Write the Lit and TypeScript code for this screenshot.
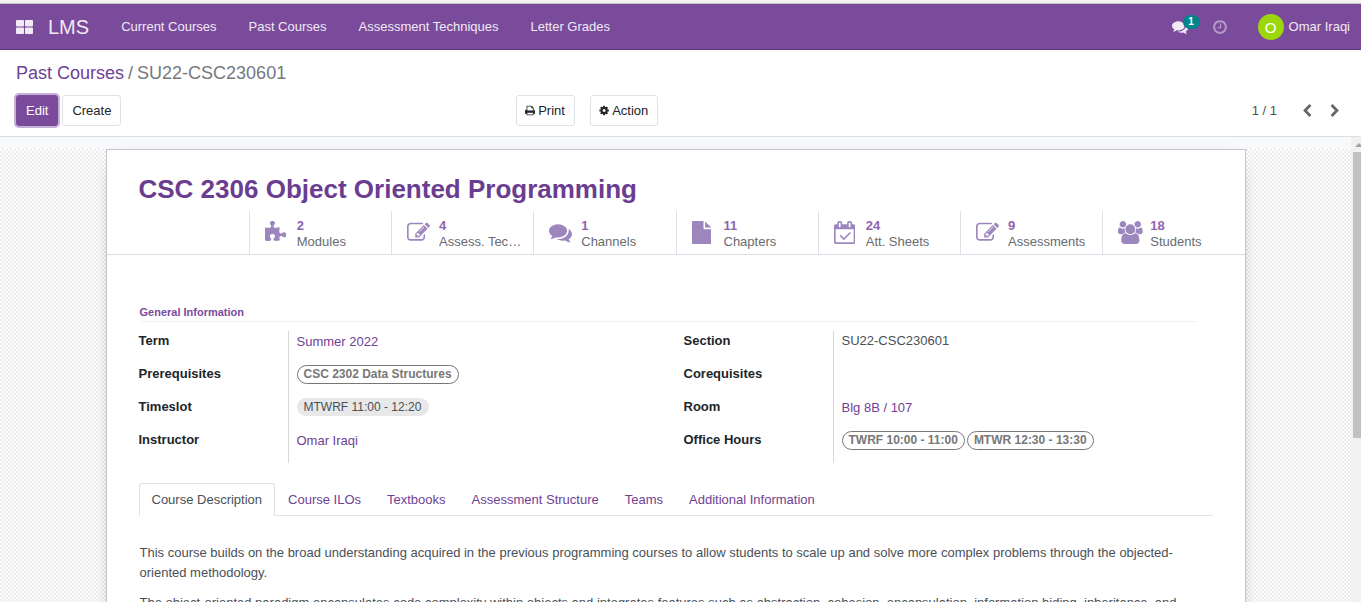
import { LitElement, html, css, svg, nothing } from "lit";
import { customElement, property, state } from "lit/decorators.js";
import { classMap } from "lit/directives/class-map.js";

const ICONS: Record<string, { box: string; d: string }> = {
  comments: {
    box: "0 0 1792 1792",
    d: "M1408 768q0 139-94 257t-256.5 186.5-353.5 68.5q-86 0-176-16-124 88-278 128-36 9-86 16h-3q-11 0-20.5-8t-11.5-21q-1-3-1-6.5t.5-6.5 2-6l2.5-5 3.5-5.5 4-5 4.5-5 4-4.5q5-6 23-25t26-29.5 22.5-29 25-38.5 20.5-44q-124-72-195-177t-71-224q0-139 94-257t256.5-186.5 353.5-68.5 353.5 68.5 256.5 186.5 94 257zm384 256q0 120-71 224.5t-195 176.5q10 24 20.5 44t25 38.5 22.5 29 26 29.5 23 25q1 1 4 4.5t4.5 5 4 5 3.5 5.5l2.5 5 2 6 .5 6.5-1 6.5q-3 14-13 22t-22 7q-50-7-86-16-154-40-278-128-90 16-176 16-271 0-472-132 58 4 88 4 161 0 309-45t264-129q125-92 192-212t67-254q0-77-23-152 129 71 204 178t75 230z",
  },
  clock: {
    box: "0 0 1792 1792",
    d: "M1024 544v448q0 14-9 23t-23 9h-320q-14 0-23-9t-9-23v-64q0-14 9-23t23-9h224v-352q0-14 9-23t23-9h64q14 0 23 9t9 23zm416 352q0-148-73-273t-198-198-273-73-273 73-198 198-73 273 73 273 198 198 273 73 273-73 198-198 73-273zm224 0q0 209-103 385.5t-279.5 279.5-385.5 103-385.5-103-279.5-279.5-103-385.5 103-385.5 279.5-279.5 385.5-103 385.5 103 279.5 279.5 103 385.5z",
  },
  print: {
    box: "64 0 1664 1792",
    d: "M448 1536h896v-256h-896v256zm0-640h896v-384h-160q-40 0-68-28t-28-68v-160h-640v640zm1152 64q0-26-19-45t-45-19-45 19-19 45 19 45 45 19 45-19 19-45zm128 0v416q0 13-9.500 22.500t-22.500 9.500h-224v160q0 40-28 68t-68 28h-960q-40 0-68-28t-28-68v-160h-224q-13 0-22.500-9.500t-9.500-22.500v-416q0-79 56.500-135.500t135.500-56.500h64v-544q0-40 28-68t68-28h672q40 0 88 20t76 48l152 152q28 28 48 76t20 88v256h64q79 0 135.500 56.500t56.500 135.500z",
  },
  cog: {
    box: "64 0 1664 1792",
    d: "M1152 896q0-106-75-181t-181-75-181 75-75 181 75 181 181 75 181-75 75-181zm512-109v222q0 12-8 23t-20 13l-185 28q-19 54-39 91 35 50 107 138 10 12 10 25t-9 23q-27 37-99 108t-94 71q-12 0-26-9l-138-108q-44 23-91 38-16 136-29 186-7 28-36 28h-222q-14 0-24.5-8.5t-11.5-21.5l-28-184q-49-16-90-37l-141 107q-10 9-25 9-14 0-25-11-126-114-165-168-7-10-7-23 0-12 8-23 15-21 51-66.5t54-70.5q-27-50-41-99l-183-27q-13-2-21-12.5t-8-23.5v-222q0-12 8-23t19-13l186-28q14-46 39-92-40-57-107-138-10-12-10-24 0-10 9-23 26-36 98.5-107.500t94.500-71.500q13 0 26 10l138 107q44-23 91-38 16-136 29-186 7-28 36-28h222q14 0 24.500 8.500t11.500 21.500l28 184q49 16 90 37l142-107q9-9 24-9 13 0 25 10 129 119 165 170 7 8 7 22 0 12-8 23-15 21-51 66.500t-54 70.500q26 50 41 98l183 28q13 2 21 12.500t8 23.500z",
  },
  left: {
    box: "0 0 1792 1792",
    d: "M1427 301l-531 531 531 531q19 19 19 45t-19 45l-166 166q-19 19-45 19t-45-19l-742-742q-19-19-19-45t19-45l742-742q19-19 45-19t45 19l166 166q19 19 19 45t-19 45z",
  },
  right: {
    box: "0 0 1792 1792",
    d: "M1363 877l-742 742q-19 19-45 19t-45-19l-166-166q-19-19-19-45t19-45l531-531-531-531q-19-19-19-45t19-45l166-166q19-19 45-19t45 19l742 742q19 19 19 45t-19 45z",
  },
  puzzle: {
    box: "91 0 1664 1792",
    d: "M1755 1083q0 81-44.5 135t-123.5 54q-41 0-77.5-17.5t-59-38-56.5-38-71-17.5q-110 0-110 124 0 39 16 115t15 115v5q-22 0-33 1-34 3-97.5 11.5t-115.5 13.5-98 5q-61 0-103-26.5t-42-83.5q0-37 17.5-71t38-56.5 38-59 17.5-77.5q0-79-54-123.5t-135-44.5q-84 0-143 45.5t-59 127.5q0 43 15 83t33.5 64.5 33.5 53 15 50.5q0 45-46 89-37 35-117 35-95 0-245-24-9-2-27.5-4t-27.5-4l-13-2q-1 0-3-1-2 0-2-1v-1024q2 1 17.5 3.5t34 5 21.5 3.5q150 24 245 24 80 0 117-35 46-44 46-89 0-22-15-50.5t-33.5-53-33.5-64.5-15-83q0-82 59-127.500t144-45.500q80 0 134 44.500t54 123.500q0 41-17.500 77.500t-38 59-38 56.500-17.500 71q0 57 42 83.500t103 26.500q64 0 180-15t163-17v2q-1 2-3.500 17.500t-5 34-3.500 21.500q-24 150-24 245 0 80 35 117 44 46 89 46 22 0 50.500-15t53-33.500 64.500-33.500 83-15q82 0 127.500 59t45.500 143z",
  },
  edit: {
    box: "0 0 1792 1792",
    d: "M888 1184l116-116-152-152-116 116v56h96v96h56zm440-720q-16-16-33 1l-350 350q-17 17-1 33t33-1l350-350q17-17 1-33zm80 594v190q0 119-84.5 203.5t-203.5 84.5h-832q-119 0-203.5-84.5t-84.5-203.5v-832q0-119 84.5-203.5t203.5-84.5h832q63 0 117 25 15 7 18 23 3 17-9 29l-49 49q-14 14-32 8-23-6-45-6h-832q-66 0-113 47t-47 113v832q0 66 47 113t113 47h832q66 0 113-47t47-113v-126q0-13 9-22l64-64q15-15 35-7t20 29zm-96-738l288 288-672 672h-288v-288zm444 132l-92 92-288-288 92-92q28-28 68-28t68 28l152 152q28 28 28 68t-28 68z",
  },
  file: {
    box: "128 0 1536 1792",
    d: "M1152 512v-472q22 14 36 28l408 408q14 14 28 36h-472zm-128 32q0 40 28 68t68 28h544v1056q0 40-28 68t-68 28h-1344q-40 0-68-28t-28-68v-1600q0-40 28-68t68-28h800v544z",
  },
  calendar: {
    box: "0 0 1664 1792",
    d: "M1303 964l-512 512q-10 9-23 9t-23-9l-288-288q-9-10-9-23t9-22l46-46q9-9 22-9t23 9l220 220 444-444q10-9 23-9t22 9l46 46q9 9 9 22t-9 23zm-1175 700h1408v-1024h-1408v1024zm384-1216v-288q0-14-9-23t-23-9h-64q-14 0-23 9t-9 23v288q0 14 9 23t23 9h64q14 0 23-9t9-23zm768 0v-288q0-14-9-23t-23-9h-64q-14 0-23 9t-9 23v288q0 14 9 23t23 9h64q14 0 23-9t9-23zm384-64v1280q0 52-38 90t-90 38h-1408q-52 0-90-38t-38-90v-1280q0-52 38-90t90-38h128v-96q0-66 47-113t113-47h64q66 0 113 47t47 113v96h384v-96q0-66 47-113t113-47h64q66 0 113 47t47 113v96h128q52 0 90 38t38 90z",
  },
  users: {
    box: "-64 0 1920 1792",
    d: "M529 896q-162 5-265 128h-134q-82 0-138-40.5t-56-118.5q0-353 124-353 6 0 43.5 21t97.5 42.5 119 21.5q67 0 133-23-5 37-5 66 0 139 81 256zm1071 637q0 120-73 189.5t-194 69.5h-874q-121 0-194-69.5t-73-189.5q0-53 3.5-103.5t14-109 26.5-108.5 43-97.5 62-81 85.5-53.5 111.5-20q10 0 43 21.5t73 48 107 48 135 21.5 135-21.5 107-48 73-48 43-21.5q61 0 111.5 20t85.5 53.5 62 81 43 97.5 26.5 108.5 14 109 3.5 103.5zm-1024-1277q0 106-75 181t-181 75-181-75-75-181 75-181 181-75 181 75 75 181zm704 384q0 159-112.5 271.5t-271.5 112.5-271.5-112.5-112.5-271.5 112.5-271.5 271.5-112.5 271.5 112.5 112.5 271.5zm576 225q0 78-56 118.5t-138 40.5h-134q-103-123-265-128 81-117 81-256 0-29-5-66 66 23 133 23 59 0 119-21.5t97.5-42.5 43.5-21q124 0 124 353zm-128-609q0 106-75 181t-181 75-181-75-75-181 75-181 181-75 181 75 75 181z",
  },
  apps: {
    box: "0 0 17 14",
    d: "M1 0h6q1 0 1 1v4.500q0 1-1 1h-6q-1 0-1-1v-4.500q0-1 1-1zM10 0h6q1 0 1 1v4.500q0 1-1 1h-6q-1 0-1-1v-4.500q0-1 1-1zM1 7.500h6q1 0 1 1v4.500q0 1-1 1h-6q-1 0-1-1v-4.500q0-1 1-1zM10 7.500h6q1 0 1 1v4.500q0 1-1 1h-6q-1 0-1-1v-4.500q0-1 1-1z",
  },
};

@customElement("lms-icon")
class LmsIcon extends LitElement {
  static styles = css`
    :host { display: inline-flex; flex: none; height: 23px; }
    svg { display: block; height: 100%; width: auto; fill: currentColor; }
  `;
  @property() name = "";
  render() {
    const icon = ICONS[this.name];
    return html`<svg viewBox=${icon.box} aria-hidden="true">${svg`<path d=${icon.d}></path>`}</svg>`;
  }
}

@customElement("lms-navbar")
class LmsNavbar extends LitElement {
  static styles = css`
    :host { display: block; }
    .bar {
      display: flex; align-items: center; height: 46px; box-sizing: border-box;
      padding: 0 11px 0 16px; background: #7a4b9b; border-bottom: 1px solid #613a7e;
      color: #f0eaf4; font-size: 13px; line-height: 20px;
    }
    a, button { color: inherit; text-decoration: none; font: inherit; background: none; border: 0; padding: 0; }
    .apps { display: flex; }
    .apps lms-icon { height: 14px; }
    .brand { font-size: 20px; margin: 0 32px 0 15px; }
    .menu { display: flex; gap: 32px; flex: 1; }
    .menu a { white-space: nowrap; }
    .tray { display: flex; align-items: center; }
    .chat { position: relative; display: flex; margin-right: 24px; }
    .chat lms-icon { height: 16px; }
    .badge {
      position: absolute; left: 11px; top: -4px; width: 17px; height: 14px; border-radius: 7px;
      background: #00838a; color: #fff; font-size: 10px; line-height: 14px; font-weight: bold; text-align: center;
    }
    .clock { display: flex; opacity: 0.5; margin-right: 30px; }
    .clock lms-icon { height: 16px; }
    .user { display: flex; align-items: center; gap: 5px; }
    .avatar {
      width: 26px; height: 26px; border-radius: 50%; background: #9bd70b; color: #fff;
      font-size: 15px; line-height: 27px; text-align: center;
    }
  `;
  render() {
    return html`<nav class="bar">
      <button class="apps" aria-label="Applications"><lms-icon name="apps"></lms-icon></button>
      <a class="brand" href="#">LMS</a>
      <div class="menu">
        ${["Current Courses", "Past Courses", "Assessment Techniques", "Letter Grades"].map(
          (m) => html`<a href="#">${m}</a>`
        )}
      </div>
      <div class="tray">
        <button class="chat" aria-label="Messages"><lms-icon name="comments"></lms-icon><span class="badge">1</span></button>
        <button class="clock" aria-label="Activities"><lms-icon name="clock"></lms-icon></button>
        <button class="user"><span class="avatar">O</span><span>Omar Iraqi</span></button>
      </div>
    </nav>`;
  }
}

@customElement("lms-control-panel")
class LmsControlPanel extends LitElement {
  static styles = css`
    :host { display: block; border-bottom: 1px solid #dcdfe4; background: #fff; }
    .panel { padding: 10px 16px; }
    .crumbs { display: flex; gap: 4px; font-size: 18px; line-height: 26px; color: #747a80; margin-bottom: 9px; }
    .crumbs a { color: #704194; text-decoration: none; }
    .row { display: grid; grid-template-columns: 500fr 829fr; }
    .left { display: flex; gap: 4px; }
    .rest { display: flex; justify-content: space-between; }
    .actions { display: flex; gap: 15px; }
    button { font: inherit; font-size: 13px; }
    .btn {
      display: flex; align-items: center; gap: 3px; height: 31px; box-sizing: border-box; padding: 0 9px;
      border: 1px solid #dee2e6; border-radius: 3px; background: #fff; color: #212529;
    }
    .btn lms-icon { height: 11px; }
    .btn.tool { padding: 0 9px 0 8px; }
    .btn.primary { background: #7a4b9b; border-color: #7a4b9b; color: #fff; box-shadow: 0 0 0 2px #c7b0d8; }
    .pager { display: flex; align-items: center; font-size: 13px; color: #495057; }
    .step { display: flex; border: 0; background: none; padding: 0; color: #63666a; }
    .step lms-icon { height: 14px; }
    .prev { margin: 0 14px 0 23px; }
    .next { margin-right: 3px; }
  `;
  render() {
    return html`<div class="panel">
      <div class="crumbs"><a href="#">Past Courses</a><span>/</span><span>SU22-CSC230601</span></div>
      <div class="row">
        <div class="left">
          <button class="btn primary">Edit</button>
          <button class="btn">Create</button>
        </div>
        <div class="rest">
          <div class="actions">
            <button class="btn tool"><lms-icon name="print"></lms-icon>Print</button>
            <button class="btn tool"><lms-icon name="cog"></lms-icon>Action</button>
          </div>
          <div class="pager">
            <span>1 / 1</span>
            <button class="step prev" aria-label="Previous"><lms-icon name="left"></lms-icon></button>
            <button class="step next" aria-label="Next"><lms-icon name="right"></lms-icon></button>
          </div>
        </div>
      </div>
    </div>`;
  }
}

type Kind = "link" | "text" | "outline" | "pill";
interface Field { label: string; kind: Kind; values: string[]; }

const STATS = [
  ["puzzle", "2", "Modules"],
  ["edit", "4", "Assess. Techniques"],
  ["comments", "1", "Channels"],
  ["file", "11", "Chapters"],
  ["calendar", "24", "Att. Sheets"],
  ["edit", "9", "Assessments"],
  ["users", "18", "Students"],
];

const GROUPS: Field[][] = [
  [
    { label: "Term", kind: "link", values: ["Summer 2022"] },
    { label: "Prerequisites", kind: "outline", values: ["CSC 2302 Data Structures"] },
    { label: "Timeslot", kind: "pill", values: ["MTWRF 11:00 - 12:20"] },
    { label: "Instructor", kind: "link", values: ["Omar Iraqi"] },
  ],
  [
    { label: "Section", kind: "text", values: ["SU22-CSC230601"] },
    { label: "Corequisites", kind: "outline", values: [] },
    { label: "Room", kind: "link", values: ["Blg 8B / 107"] },
    { label: "Office Hours", kind: "outline", values: ["TWRF 10:00 - 11:00", "MTWR 12:30 - 13:30"] },
  ],
];

const TABS = ["Course Description", "Course ILOs", "Textbooks", "Assessment Structure", "Teams", "Additional Information"];

@customElement("lms-course-sheet")
class LmsCourseSheet extends LitElement {
  static styles = css`
    :host {
      display: block; box-sizing: border-box; max-width: 1140px; margin: 0 auto; min-height: 100%;
      background: #fff; border: 1px solid #c4c4cf; box-shadow: 0 5px 20px -15px #000;
      font-size: 13px; line-height: 20px; color: #495057;
    }
    a { color: #704194; text-decoration: none; }
    h1 { margin: 0; padding: 24px 32px 7px; font-size: 26px; line-height: 30px; color: #6b3d90; }
    .stats { display: grid; grid-template-columns: repeat(8, minmax(0, 1fr)); border-bottom: 1px solid #dcdce6; }
    .stat {
      display: flex; align-items: center; gap: 6px; height: 43px; box-sizing: border-box;
      padding: 2px 12px 0 15px; border: 0; border-left: 1px solid #dfe1e8; background: none;
      font: inherit; line-height: 16px; text-align: left; color: #666b70;
    }
    .stat:first-of-type { grid-column-start: 2; }
    .glyph { display: flex; flex: none; width: 26px; padding-bottom: 2px; color: #9d86be; }
    .copy { min-width: 0; }
    .num { display: block; font-weight: bold; color: #9063b0; }
    .name { display: block; overflow: hidden; text-overflow: ellipsis; white-space: nowrap; }
    .body { padding: 48px 32px 0; }
    h2 {
      margin: 0 16px 9px 1px; font-size: 11px; line-height: 18px; color: #7a4b9b;
      border-bottom: 1px solid #f2f2f4;
    }
    .groups { display: grid; grid-template-columns: 1fr 1fr; gap: 16px; }
    dl { margin: 0; }
    .field { display: grid; grid-template-columns: 149px minmax(0, 1fr); height: 33px; }
    dt { font-weight: bold; color: #212529; }
    dd { margin: 0; padding-left: 8px; border-left: 1px solid #d8d8d8; display: flex; gap: 2px; align-items: flex-start; }
    dd a { padding-top: 1px; }
    .tag {
      font-size: 12px; line-height: 17px; border-radius: 10px; padding: 0 6px; margin-top: 1px;
      border: 1px solid #777; color: #777; font-weight: bold; white-space: nowrap;
    }
    .tag.pill { background: #e8e8e8; border-color: #e8e8e8; color: #495057; font-weight: normal; line-height: 16px; padding: 0 7px 0 6px; }
    .tabs { display: flex; margin-top: 20px; border-bottom: 1px solid #dee2e6; }
    .tab {
      font: inherit; color: #704194; background: none; padding: 6px 12px 5px; white-space: nowrap;
      border: 1px solid transparent; border-bottom: 0; border-radius: 3px 3px 0 0;
    }
    .tab.active { color: #495057; background: #fff; border-color: #dee2e6; margin-bottom: -1px; padding-bottom: 6px; }
    .text { padding: 27px 32px 0 1px; }
    p { margin: 0 0 10px; }
  `;
  @state() private active = 0;

  private value(kind: Kind, v: string) {
    if (kind === "link") return html`<a href="#">${v}</a>`;
    if (kind === "text") return html`<span>${v}</span>`;
    return html`<span class=${classMap({ tag: true, pill: kind === "pill" })}>${v}</span>`;
  }

  render() {
    return html`
      <h1>CSC 2306 Object Oriented Programming</h1>
      <div class="stats">
        ${STATS.map(
          ([icon, num, name]) => html`<button class="stat">
            <span class="glyph"><lms-icon name=${icon}></lms-icon></span>
            <span class="copy"><span class="num">${num}</span><span class="name">${name}</span></span>
          </button>`
        )}
      </div>
      <div class="body">
        <h2>General Information</h2>
        <div class="groups">
          ${GROUPS.map(
            (g) => html`<dl>
              ${g.map(
                (f) => html`<div class="field"><dt>${f.label}</dt><dd>${f.values.map((v) => this.value(f.kind, v))}</dd></div>`
              )}
            </dl>`
          )}
        </div>
        <div class="tabs" role="tablist">
          ${TABS.map(
            (t, i) => html`<button
              role="tab"
              aria-selected=${i === this.active ? "true" : "false"}
              class=${classMap({ tab: true, active: i === this.active })}
              @click=${() => (this.active = i)}
            >${t}</button>`
          )}
        </div>
        ${this.active === 0
          ? html`<div class="text" role="tabpanel">
              <p>This course builds on the broad understanding acquired in the previous programming courses to allow students to scale up and solve more complex problems through the objected-oriented methodology.</p>
              <p>The object-oriented paradigm encapsulates code complexity within objects and integrates features such as abstraction, cohesion, encapsulation, information hiding, inheritance, and</p>
            </div>`
          : nothing}
      </div>
    `;
  }
}

@customElement("app-root")
class AppRoot extends LitElement {
  static styles = css`
    :host {
      display: flex; flex-direction: column; height: 100vh; overflow: hidden; background: #fff;
      font-family: "Liberation Sans", Arial, sans-serif;
    }
    .edge { flex: none; height: 3px; background: #f2f1f0; border-bottom: 1px solid #c9c5cc; }
    .content { flex: 1; min-height: 0; display: flex; background: #f8f9fb; }
    .view { flex: 1; min-width: 0; overflow: hidden; padding-top: 12px; display: flex; }
    .canvas {
      flex: 1; min-width: 0;
      background: repeating-conic-gradient(#ebebeb 0 25%, #fff 0 50%) 0 0 / 4px 4px;
    }
    .scroll { flex: none; width: 10px; display: flex; flex-direction: column; align-items: flex-end; background: #f1f1f1; overflow: hidden; }
    .up { flex: none; display: block; width: 8px; height: 15px; }
    .thumb { width: 8px; height: 61.5%; background: #c1c1c1; }
  `;
  render() {
    return html`
      <div class="edge"></div>
      <lms-navbar></lms-navbar>
      <lms-control-panel></lms-control-panel>
      <main class="content">
        <div class="view"><div class="canvas"><lms-course-sheet></lms-course-sheet></div></div>
        <div class="scroll">
          <svg class="up" viewBox="0 0 8 15" aria-hidden="true"><path d="M2 10l4-4 4 4z" fill="#a3a3a3"></path></svg>
          <div class="thumb"></div>
        </div>
      </main>
    `;
  }
}
